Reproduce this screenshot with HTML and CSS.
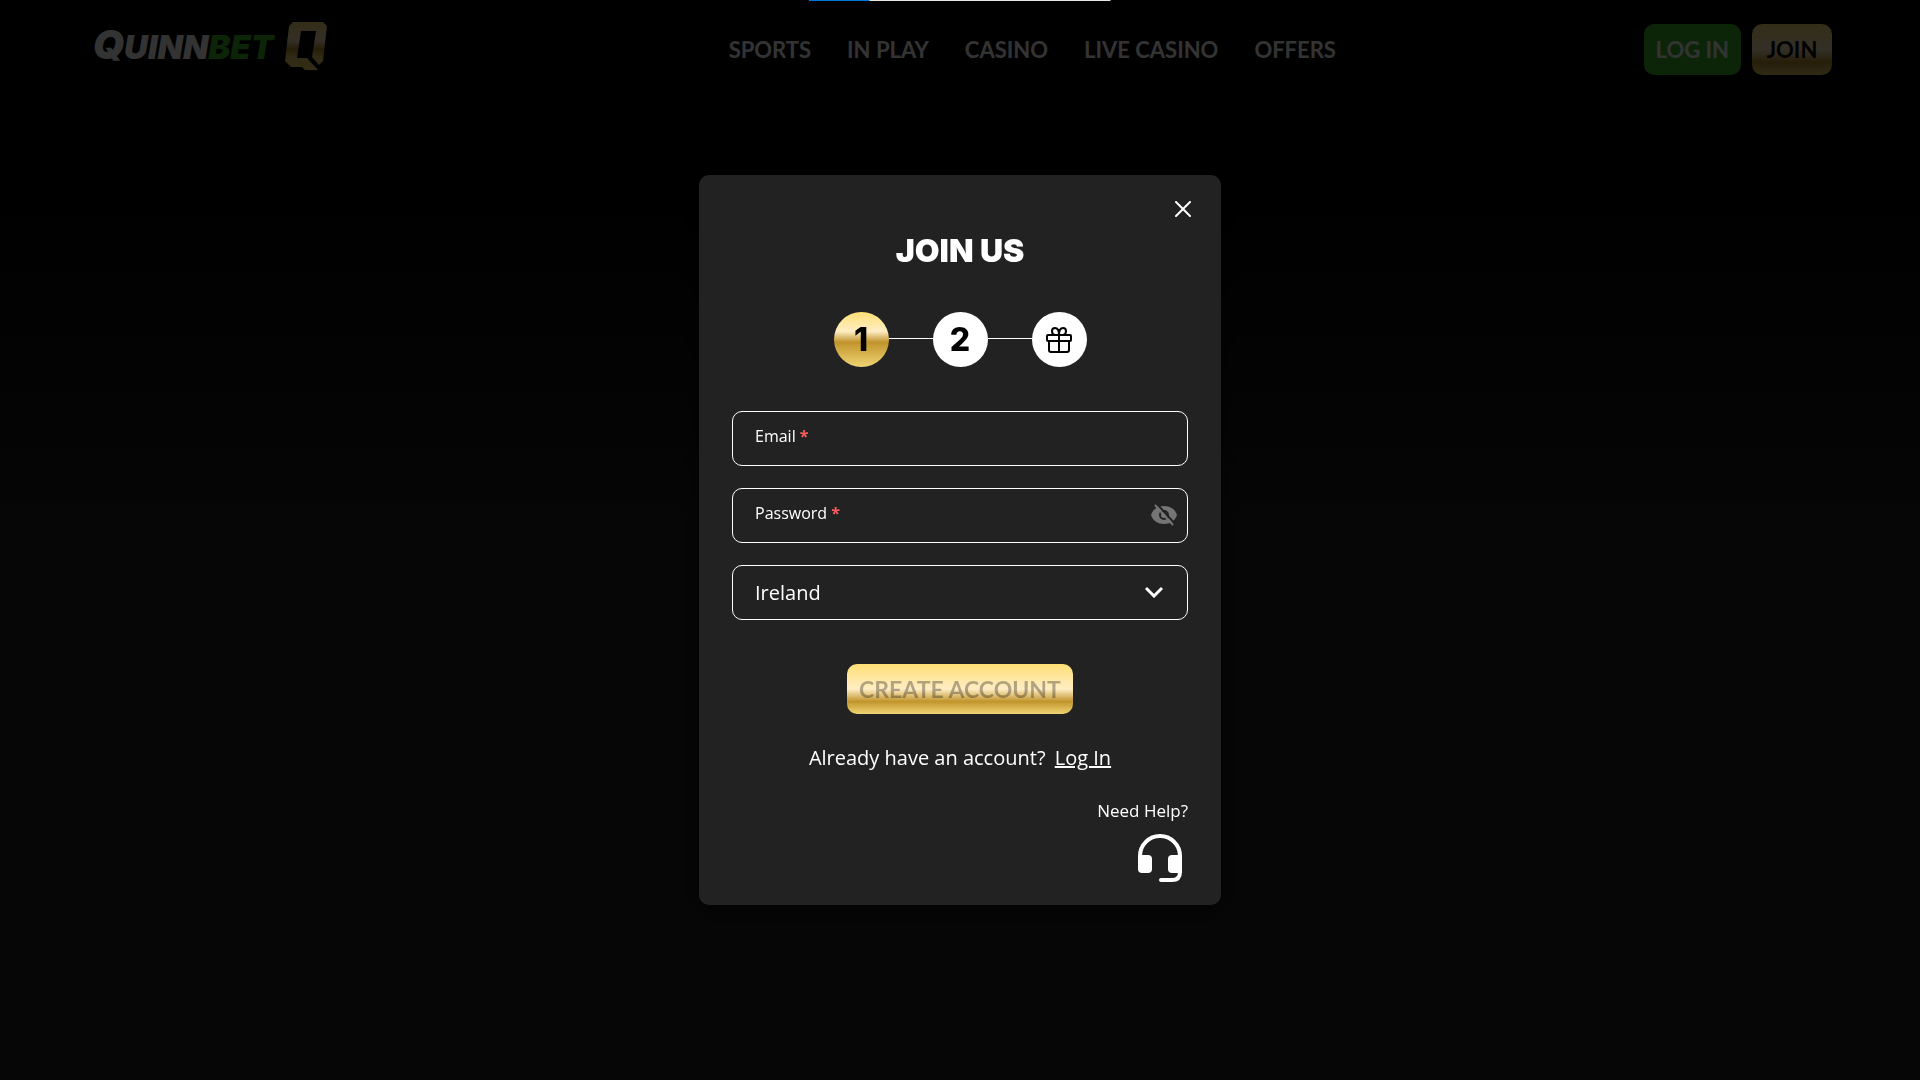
FILE: index.html
```html
<!DOCTYPE html>
<html lang="en">
<head>
  <meta charset="UTF-8">
  <meta name="viewport" content="width=device-width, initial-scale=1.0">
  <title>QuinnBet - Join Us</title>
  <link rel="stylesheet" href="styles.css">
</head>
<body>
  <header class="header">
    <a class="logo" href="#" aria-label="QuinnBet">
      <span class="logo-text"><span class="logo-cap">Q</span>UINN<span class="logo-bet">BET</span></span>
      <svg class="logo-mark" viewBox="0 0 42 49" width="42" height="49" aria-hidden="true">
        <defs>
          <linearGradient id="gold" x1="0" y1="0" x2="0" y2="1">
            <stop offset="0" stop-color="#ffdf74"/>
            <stop offset=".4" stop-color="#ffedc4"/>
            <stop offset=".56" stop-color="#c1942c"/>
            <stop offset=".75" stop-color="#f0d574"/>
            <stop offset="1" stop-color="#ffdf74"/>
          </linearGradient>
        </defs>
        <path fill="url(#gold)" d="M8 0H38L42 4L38 39L34 43L27 35L31 9H16L12 36H22L33 48H20L17 45H6L0 39L4 4Z"/>
      </svg>
    </a>
    <nav class="nav">
      <a href="#">SPORTS</a>
      <a href="#">IN PLAY</a>
      <a href="#">CASINO</a>
      <a href="#">LIVE CASINO</a>
      <a href="#">OFFERS</a>
    </nav>
    <div class="actions">
      <button class="btn btn-green" type="button">LOG IN</button>
      <button class="btn btn-gold" type="button">JOIN</button>
    </div>
  </header>

  <div class="overlay">
    <div class="loader"><div class="loader-bar"></div></div>

    <form class="modal">
      <button class="close" type="button" aria-label="Close">
        <svg viewBox="0 0 16 16" width="16" height="16"><path d="M1 1L15 15M15 1L1 15" stroke="#fff" stroke-width="2" stroke-linecap="round"/></svg>
      </button>
      <h1>JOIN US</h1>

      <div class="steps">
        <span class="step active">1</span>
        <span class="line"></span>
        <span class="step">2</span>
        <span class="line"></span>
        <span class="step">
          <svg viewBox="0 0 26 26" width="26" height="26" fill="none" stroke="#000" stroke-width="2" stroke-linejoin="round">
            <rect x="1" y="8" width="24" height="6" rx="1"/>
            <path d="M3 14V23Q3 25 5 25H21Q23 25 23 23V14M13 8V25"/>
            <path d="M13 8H9C5 7 5 1 9 1C12 1 13 4 13 8C13 4 14 1 17 1C21 1 21 7 17 8Z"/>
          </svg>
        </span>
      </div>

      <div class="fields">
        <div class="field">
          <label for="email">Email<span class="req">*</span></label>
          <input type="email" id="email">
        </div>
        <div class="field">
          <label for="password">Password<span class="req">*</span></label>
          <input type="password" id="password">
          <button class="eye" type="button" aria-label="Show password">
            <svg viewBox="0 0 26 22" width="26" height="22">
              <path fill="#757575" d="M0 11C2 5 7 2 13 2S24 5 26 11C24 17 19 20 13 20S2 17 0 11Z"/>
              <circle cx="13" cy="11" r="4" fill="none" stroke="#222" stroke-width="2"/>
              <path d="M6 0L25 21" stroke="#222" stroke-width="2"/>
              <path d="M4 1L22 21" stroke="#757575" stroke-width="2"/>
            </svg>
          </button>
        </div>
        <div class="field">
          <select id="country" aria-label="Country">
            <option>Ireland</option>
            <option>United Kingdom</option>
          </select>
          <svg class="chevron" viewBox="0 0 18 12" width="18" height="12"><path d="M1 2L9 10L17 2" fill="none" stroke="#fff" stroke-width="3"/></svg>
        </div>
      </div>

      <button class="btn btn-gold create" type="submit" disabled>CREATE ACCOUNT</button>

      <p class="already">Already have an account? <a href="#">Log In</a></p>

      <a class="help" href="#">
        <span>Need Help?</span>
        <svg viewBox="0 0 44 48" width="44" height="48">
          <path d="M2 26V22A20 20 0 0 1 42 22V38Q42 46 34 46H23" fill="none" stroke="#fff" stroke-width="4" stroke-linecap="round"/>
          <rect x="0" y="21" width="14" height="18" rx="4" fill="#fff"/>
          <path d="M44 21H34Q30 21 30 25V35Q30 39 34 39H44Z" fill="#fff"/>
        </svg>
      </a>
    </form>
  </div>
</body>
</html>
```
FILE: styles.css
```css
* {
  box-sizing: border-box;
}
body {
  margin: 0;
  min-height: 100vh;
  background: linear-gradient(to bottom, #000 0, #000 160px, #1e1e1e 520px);
  color: #fff;
  font-family: 'Open Sans', 'Liberation Sans', sans-serif;
  font-weight: 500;
}
a {
  color: inherit;
}
button,
input,
select {
  font-family: inherit;
  font-weight: inherit;
  color: inherit;
}
.header {
  display: flex;
  justify-content: space-between;
  align-items: center;
  padding: 23px 88px 0 93px;
}
.logo {
  display: flex;
  align-items: center;
  gap: 12px;
  min-width: 328px;
  padding-bottom: 4px;
  margin-top: -2px;
  text-decoration: none;
}
.logo-text {
  width: 180px;
  font-family: Inter, 'Liberation Sans', sans-serif;
  font-size: 33px;
  line-height: 48px;
  font-weight: 900;
  font-style: italic;
  white-space: nowrap;
}
.logo-cap {
  font-size: 40px;
}
.logo-bet {
  color: #3cb428;
}
.nav {
  display: flex;
  gap: 36px;
}
.nav a {
  font-family: Lato, 'Liberation Sans', sans-serif;
  font-size: 22px;
  font-weight: 700;
  text-decoration: none;
  white-space: nowrap;
}
.actions {
  display: flex;
  gap: 11px;
}
.btn {
  min-width: 80px;
  height: 51px;
  padding: 0 12px;
  border: none;
  border-radius: 10px;
  font-family: Lato, 'Liberation Sans', sans-serif;
  font-size: 22px;
  font-weight: 700;
  white-space: nowrap;
  cursor: pointer;
}
.btn-green {
  background: #3cb428;
  color: #fff;
}
.btn-gold {
  background: linear-gradient(to bottom, #ffdf74 0%, #ffedc4 50%, #c1942c 75%, #f0d574 100%);
  color: #000;
}
.btn-gold:disabled {
  color: rgba(0, 0, 0, 0.3);
  cursor: default;
}
.create {
  height: 50px;
  font-size: 23px;
}
.overlay {
  position: fixed;
  inset: 0;
  display: flex;
  align-items: center;
  justify-content: center;
  background: rgba(0, 0, 0, 0.8);
}
.loader {
  position: absolute;
  top: 0;
  left: 50%;
  width: 301px;
  height: 1px;
  transform: translateX(-50%);
  background: #e5e5e5;
}
.loader-bar {
  width: 20%;
  height: 100%;
  background: #0075db;
}
.modal {
  display: flex;
  flex-direction: column;
  align-items: center;
  width: 522px;
  max-width: 100%;
  padding: 26px 33px 23px;
  border-radius: 10px;
  background: #222;
  box-shadow: 0 4px 16px rgba(0, 0, 0, 0.5);
}
.close {
  display: flex;
  align-self: flex-end;
  margin-right: -3px;
  padding: 0;
  border: none;
  background: none;
  cursor: pointer;
}
h1 {
  margin: 14px 0 42px;
  font-family: Inter, 'Liberation Sans', sans-serif;
  font-size: 32px;
  line-height: 39px;
  font-weight: 900;
}
.steps {
  display: flex;
  align-items: center;
}
.step {
  display: flex;
  align-items: center;
  justify-content: center;
  width: 55px;
  height: 55px;
  border-radius: 50%;
  background: #fff;
  color: #000;
  font-family: Inter, 'Liberation Sans', sans-serif;
  font-size: 32px;
  font-weight: 800;
}
.step.active {
  background: linear-gradient(to bottom, #ffdf74 0%, #ffedc4 35%, #c1942c 55%, #f0d574 100%);
}
.line {
  width: 44px;
  height: 1px;
  margin-bottom: 2px;
  background: #fff;
}
.fields {
  display: flex;
  flex-direction: column;
  gap: 22px;
  width: 100%;
  margin: 44px 0;
}
.field {
  display: flex;
  align-items: center;
  height: 55px;
  padding: 0 10px 0 22px;
  border: 1px solid #fff;
  border-radius: 10px;
}
.field label {
  padding-bottom: 6px;
  font-size: 16px;
}
.req {
  margin-left: 4px;
  color: #ff5c5c;
  font-weight: 700;
}
.field input {
  flex: 1;
  min-width: 0;
  height: 100%;
  border: none;
  outline: none;
  background: none;
  font-size: 16px;
}
.eye {
  display: flex;
  padding: 0 0 2px;
  border: none;
  background: none;
  cursor: pointer;
}
.field select {
  flex: 1;
  height: 100%;
  padding: 0;
  border: none;
  outline: none;
  background: none;
  appearance: none;
  font-size: 20px;
}
.field option {
  background: #222;
}
.chevron {
  margin: 0 14px 2px 0;
  pointer-events: none;
}
.already {
  margin: 32px 0 30px;
  font-size: 20px;
  line-height: 24px;
}
.already a {
  margin-left: 4px;
}
.help {
  display: flex;
  flex-direction: column;
  align-items: flex-end;
  align-self: flex-end;
  gap: 12px;
  font-size: 17px;
  line-height: 22px;
  text-decoration: none;
}
.help svg {
  margin-right: 6px;
}
```
